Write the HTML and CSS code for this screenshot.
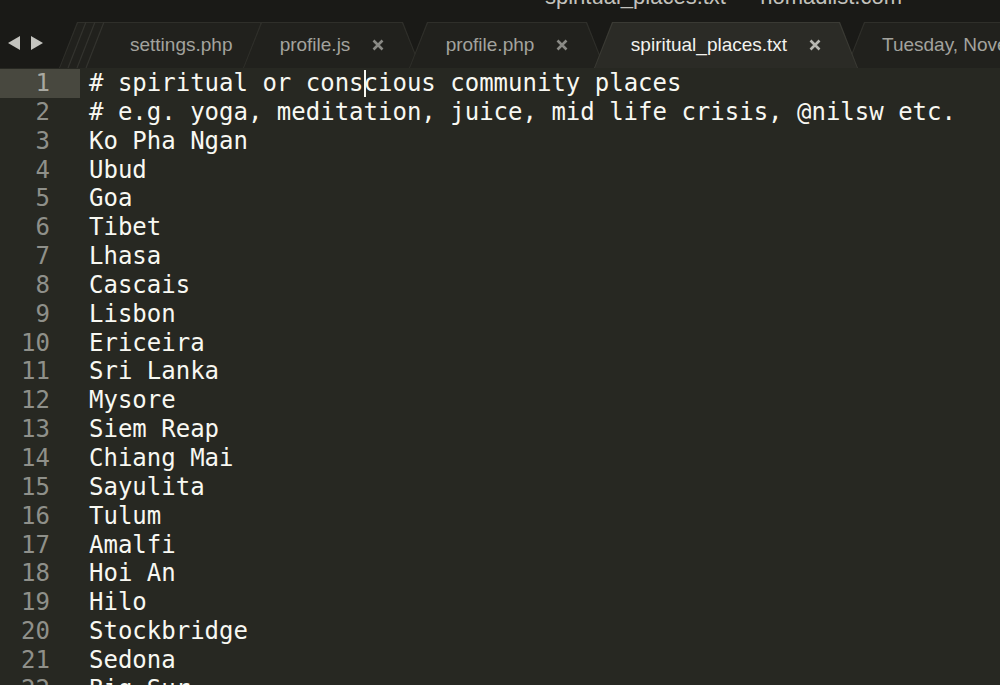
FILE: index.html
```html
<!DOCTYPE html>
<html>
<head>
<meta charset="utf-8">
<link rel="stylesheet" href="styles.css">
</head>
<body>
<div class="window">
  <div class="titlebar"><div class="title">spiritual_places.txt — nomadlist.com</div></div>
  <div class="tabbar">
    <div class="nav">
      <svg width="59" height="46" viewBox="0 0 59 46"><polygon points="20,14 8,21 20,28" fill="#c4c4bf"/><polygon points="31,14 43,21 31,28" fill="#c4c4bf"/></svg>
    </div>
    <div class="tab tab-first">
      <svg class="stack" width="60" height="46" viewBox="0 0 60 46"><line x1="9" y1="46" x2="27" y2="0" stroke="#34342f" stroke-width="1.2"/><line x1="18" y1="46" x2="36" y2="0" stroke="#34342f" stroke-width="1.2"/><line x1="27" y1="46" x2="45" y2="0" stroke="#34342f" stroke-width="1.2"/></svg>
      <span class="name">settings.php</span>
    </div>
    <div class="tab tab-js">
      <span class="name">profile.js</span>
      <svg class="close" width="12" height="12" viewBox="0 0 12 12"><path d="M1.5 1.5L10.5 10.5M10.5 1.5L1.5 10.5"/></svg>
    </div>
    <div class="tab tab-php">
      <span class="name">profile.php</span>
      <svg class="close" width="12" height="12" viewBox="0 0 12 12"><path d="M1.5 1.5L10.5 10.5M10.5 1.5L1.5 10.5"/></svg>
    </div>
    <div class="tab active">
      <span class="name">spiritual_places.txt</span>
      <svg class="close" width="12" height="12" viewBox="0 0 12 12"><path d="M1.5 1.5L10.5 10.5M10.5 1.5L1.5 10.5"/></svg>
    </div>
    <div class="tab tab-last">
      <span class="name">Tuesday, November 7, 2017</span>
    </div>
  </div>
  <div class="editor">
    <div class="line current"><span class="ln">1</span><span class="tx"># spiritual or cons<span class="cursor"></span>cious community places</span></div>
    <div class="line"><span class="ln">2</span><span class="tx"># e.g. yoga, meditation, juice, mid life crisis, @nilsw etc.</span></div>
    <div class="line"><span class="ln">3</span><span class="tx">Ko Pha Ngan</span></div>
    <div class="line"><span class="ln">4</span><span class="tx">Ubud</span></div>
    <div class="line"><span class="ln">5</span><span class="tx">Goa</span></div>
    <div class="line"><span class="ln">6</span><span class="tx">Tibet</span></div>
    <div class="line"><span class="ln">7</span><span class="tx">Lhasa</span></div>
    <div class="line"><span class="ln">8</span><span class="tx">Cascais</span></div>
    <div class="line"><span class="ln">9</span><span class="tx">Lisbon</span></div>
    <div class="line"><span class="ln">10</span><span class="tx">Ericeira</span></div>
    <div class="line"><span class="ln">11</span><span class="tx">Sri Lanka</span></div>
    <div class="line"><span class="ln">12</span><span class="tx">Mysore</span></div>
    <div class="line"><span class="ln">13</span><span class="tx">Siem Reap</span></div>
    <div class="line"><span class="ln">14</span><span class="tx">Chiang Mai</span></div>
    <div class="line"><span class="ln">15</span><span class="tx">Sayulita</span></div>
    <div class="line"><span class="ln">16</span><span class="tx">Tulum</span></div>
    <div class="line"><span class="ln">17</span><span class="tx">Amalfi</span></div>
    <div class="line"><span class="ln">18</span><span class="tx">Hoi An</span></div>
    <div class="line"><span class="ln">19</span><span class="tx">Hilo</span></div>
    <div class="line"><span class="ln">20</span><span class="tx">Stockbridge</span></div>
    <div class="line"><span class="ln">21</span><span class="tx">Sedona</span></div>
    <div class="line"><span class="ln">22</span><span class="tx">Big Sur</span></div>
    <div class="line"><span class="ln">23</span><span class="tx">Joshua Tree</span></div>
  </div>
</div>
</body>
</html>
```
FILE: styles.css
```css
html, body {
  margin: 0;
  padding: 0;
  background: #1a1a17;
  overflow: hidden;
}
.window {
  width: 1000px;
  height: 685px;
  overflow: hidden;
  background: #272822;
}
.titlebar {
  display: flow-root;
  height: 22px;
  background: #1a1a17;
  padding-left: 545px;
}
.title {
  font-family: "Liberation Sans", Arial, sans-serif;
  font-size: 22px;
  line-height: 24px;
  margin-top: -15px;
  color: #c2c2bd;
  white-space: nowrap;
}
.tabbar {
  height: 46px;
  display: flex;
  background: #1a1a17;
  overflow: hidden;
}
.nav {
  width: 59px;
  flex: none;
}
.nav svg { display: block; }
.tab {
  position: relative;
  z-index: 1;
  height: 46px;
  flex: none;
  display: flex;
  align-items: center;
  justify-content: center;
  gap: 22px;
  font-family: "Liberation Sans", Arial, sans-serif;
  font-size: 19px;
  color: #a3a39e;
}
.tab::before,
.tab::after {
  content: "";
  position: absolute;
  clip-path: polygon(18px 0, calc(100% - 18px) 0, 100% 100%, 0 100%);
}
.tab::before {
  inset: 0;
  background: #2f2f2a;
}
.tab::after {
  inset: 1px 1px 0 1px;
  background: #21211d;
}
.tab > * {
  position: relative;
  z-index: 1;
}
.tab .name { white-space: nowrap; }
.close { display: block; }
.close path {
  stroke: #8a8a85;
  stroke-width: 2.6;
  fill: none;
}
.tab-first {
  width: 220px;
  justify-content: flex-start;
  padding-left: 71px;
  box-sizing: border-box;
}
.stack {
  position: absolute;
  left: 0;
  top: 0;
}
.tab-js {
  width: 178px;
  margin-left: -36px;
}
.tab-php {
  width: 196px;
  margin-left: -12px;
}
.active {
  width: 264px;
  margin-left: -11px;
  z-index: 3;
  color: #f2f2ee;
}
.active::before { background: #3a3a34; }
.active::after { background: #2b2b26; }
.active .close path { stroke: #b8b8b2; }
.tab-last {
  width: 320px;
  margin-left: -12px;
  justify-content: flex-start;
  padding-left: 36px;
  box-sizing: border-box;
}
.editor {
  padding-top: 1px;
  font-family: "DejaVu Sans Mono", monospace;
  font-size: 24px;
  line-height: 28.85px;
}
.line {
  display: flex;
  height: 28.85px;
}
.ln {
  width: 80px;
  flex: none;
  box-sizing: border-box;
  padding-right: 30px;
  text-align: right;
  color: #8f908a;
}
.current .ln {
  background: #48483f;
  color: #a9a9a2;
}
.tx {
  padding-left: 9px;
  color: #f8f8f2;
  white-space: pre;
}
.cursor {
  display: inline-block;
  width: 0;
  height: 27px;
  border-left: 2px solid #f8f8f0;
  margin-right: -2px;
  vertical-align: -6px;
}
```
